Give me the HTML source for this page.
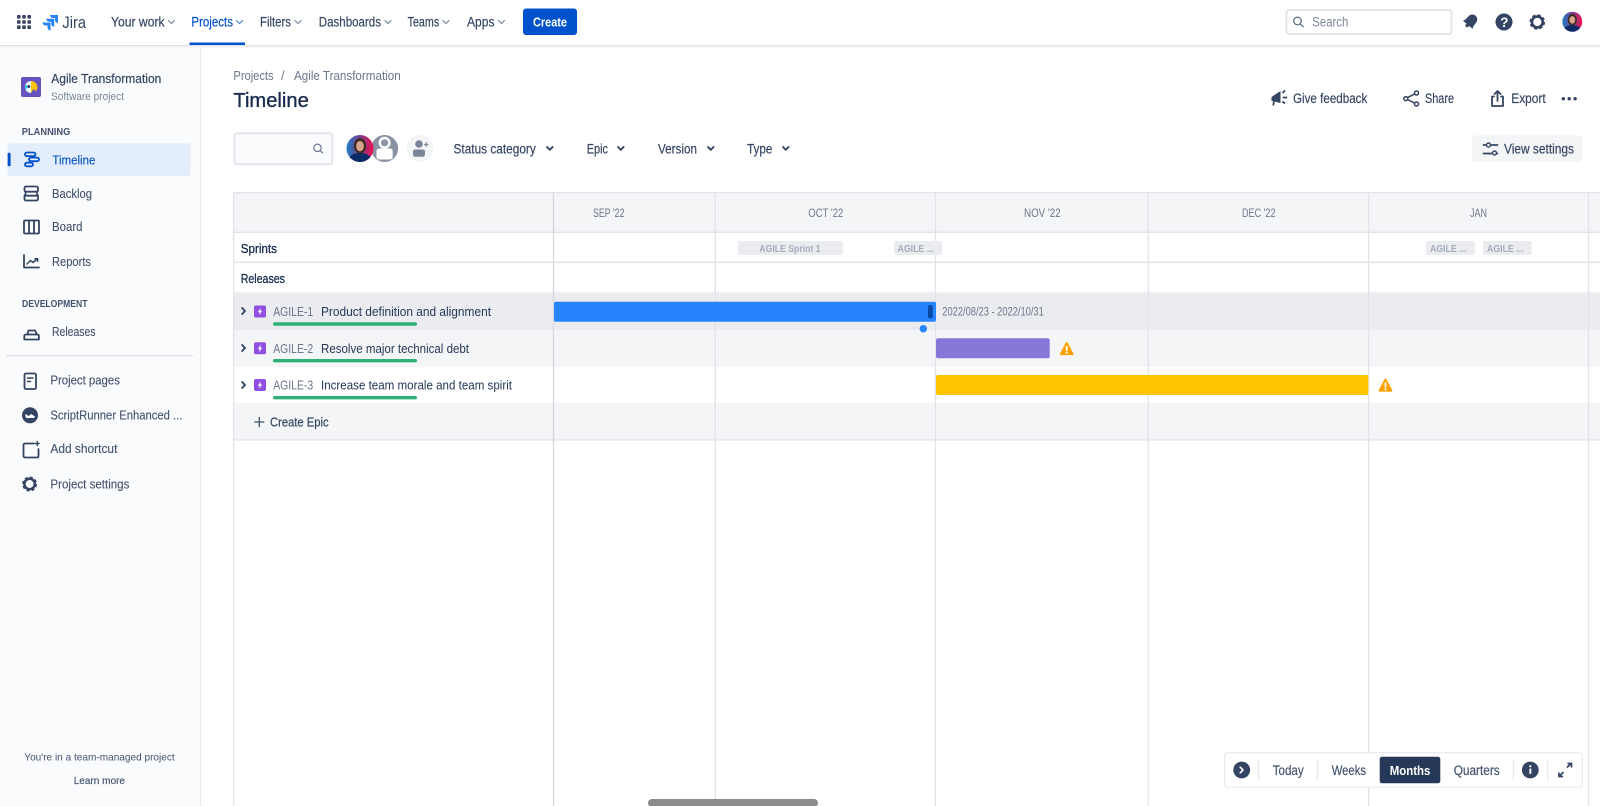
<!DOCTYPE html>
<html lang="en"><head><meta charset="utf-8"><title>Timeline - Jira</title>
<style>
html,body{margin:0;padding:0;background:#fff;width:1600px;height:806px;overflow:hidden}
svg{display:block}
text{font-family:"Liberation Sans",sans-serif;fill:#42526e;font-size:13px}
.n{fill:#344563;font-size:13.5px;stroke:#344563;stroke-width:.18}
.s{fill:#42526e;font-size:13px;stroke:#42526e;stroke-width:.12}
.d{fill:#172b4d;font-size:13px}
.m{fill:#6b778c;font-size:11.5px}
.st{fill:none;stroke:#344563;stroke-width:1.8;stroke-linecap:round;stroke-linejoin:round}
.ch{fill:none;stroke:#7a869a;stroke-width:1.2;stroke-linecap:round;stroke-linejoin:round}
.chd{fill:none;stroke:#344563;stroke-width:1.9;stroke-linecap:round;stroke-linejoin:round}
.l{stroke:#e1e3e8;stroke-width:1.3}
.chip{fill:#a5adba;font-size:10.5px;font-weight:bold}
</style></head><body>
<svg xmlns="http://www.w3.org/2000/svg" width="1600" height="806" viewBox="0 0 1600 806">
<defs>
<linearGradient id="ag" x1="0" y1="0" x2="1" y2="0"><stop offset="0" stop-color="#1d7fc4"/><stop offset=".5" stop-color="#7a3c8f"/><stop offset="1" stop-color="#f0134d"/></linearGradient>
<clipPath id="ac"><circle cx="0" cy="0" r="1"/></clipPath>
<g id="av"><g clip-path="url(#ac)"><rect x="-1" y="-1" width="2" height="2" fill="url(#ag)"/><ellipse cx="0" cy="-.2" rx=".46" ry=".56" fill="#3f2a22"/><ellipse cx="0" cy="-.18" rx=".29" ry=".38" fill="#d8a58c"/><ellipse cx="0" cy=".85" rx=".85" ry=".52" fill="#0b2a66"/></g></g>
<g id="warn"><path d="M7 .4 Q7.6 .4 8 1.2 L13.8 12.4 Q14.2 13.6 13 13.6 H1 Q-.2 13.6 .2 12.4 L6 1.2 Q6.4 .4 7 .4 Z" fill="#ffa000"/><rect x="6.1" y="4.3" width="1.8" height="5.3" rx=".7" fill="#fff"/><circle cx="7" cy="11.3" r="1.05" fill="#fff"/></g>
<g id="ep"><rect width="12" height="12" rx="2" fill="#904ee2"/><path d="M6.8 2.2 L3.8 6.6 H5.6 L5 9.8 L8.2 5.4 H6.3 Z" fill="#fff"/></g>
</defs>

<!-- sidebar -->
<rect x="0" y="45" width="200" height="761" fill="#fafbfc"/>
<rect x="200" y="45" width="1.2" height="761" fill="#ebecf0"/>

<!-- table backgrounds -->
<rect x="233.5" y="192.5" width="1366.5" height="40" fill="#f4f5f7"/>
<rect x="233.5" y="292.3" width="1366.5" height="37.7" fill="#ebecf0"/>
<rect x="233.5" y="330" width="1366.5" height="36.7" fill="#f4f5f7"/>
<rect x="233.5" y="403" width="1366.5" height="37" fill="#f4f5f7"/>
<path class="l" d="M233.5 192.6H1600M233.5 232.3H1600M233.5 262.3H1600M233.5 440H1600" fill="none"/>
<path class="l" d="M233.6 192.6V806M715.3 192.6V806M935.5 192.6V806M1148.3 192.6V806M1368.6 192.6V806M1588.5 192.6V806" fill="none"/>
<path d="M553.5 192.6V806" stroke="#d5d8de" stroke-width="1.3"/>

<!-- header -->
<rect x="0" y="0" width="1600" height="45" fill="#fff"/>
<rect x="0" y="45" width="1600" height="1" fill="#dfe1e6"/>
<rect x="0" y="46" width="1600" height="1.5" fill="#f1f2f4"/>
<g fill="#344563">
<rect x="17" y="15" width="3.6" height="3.6" rx=".8"/><rect x="22.2" y="15" width="3.6" height="3.6" rx=".8"/><rect x="27.4" y="15" width="3.6" height="3.6" rx=".8"/>
<rect x="17" y="20.2" width="3.6" height="3.6" rx=".8"/><rect x="22.2" y="20.2" width="3.6" height="3.6" rx=".8"/><rect x="27.4" y="20.2" width="3.6" height="3.6" rx=".8"/>
<rect x="17" y="25.4" width="3.6" height="3.6" rx=".8"/><rect x="22.2" y="25.4" width="3.6" height="3.6" rx=".8"/><rect x="27.4" y="25.4" width="3.6" height="3.6" rx=".8"/>
</g>
<g fill="#2684ff"><path d="M50 15h8v8a3 3 0 0 1-3-3v-2h-2a3 3 0 0 1-3-3z"/><path d="M46.2 18.8h8v8a3 3 0 0 1-3-3v-2h-2a3 3 0 0 1-3-3z"/><path d="M42.5 22.5h8v8a3 3 0 0 1-3-3v-2h-2a3 3 0 0 1-3-3z"/></g>
<text x="62.4" y="28" textLength="23.6" lengthAdjust="spacingAndGlyphs" style="font-size:17px;fill:#344563">Jira</text>
<text class="n" x="111" y="26.5" textLength="53.6" lengthAdjust="spacingAndGlyphs">Your work</text>
<path class="ch" d="M168.5 20.5l3 3 3-3"/>
<text class="n" x="191.4" y="26.5" textLength="41.6" lengthAdjust="spacingAndGlyphs" style="fill:#0052cc;stroke:#0052cc">Projects</text>
<path class="ch" d="M236.5 20.5l3 3 3-3" style="stroke:#4c7fd1"/>
<rect x="189.5" y="42.5" width="55.5" height="2.5" fill="#0052cc"/>
<text class="n" x="260" y="26.5" textLength="31" lengthAdjust="spacingAndGlyphs">Filters</text>
<path class="ch" d="M295 20.5l3 3 3-3"/>
<text class="n" x="318.8" y="26.5" textLength="62.2" lengthAdjust="spacingAndGlyphs">Dashboards</text>
<path class="ch" d="M385 20.5l3 3 3-3"/>
<text class="n" x="407.6" y="26.5" textLength="31.6" lengthAdjust="spacingAndGlyphs">Teams</text>
<path class="ch" d="M443 20.5l3 3 3-3"/>
<text class="n" x="467" y="26.5" textLength="27.5" lengthAdjust="spacingAndGlyphs">Apps</text>
<path class="ch" d="M498.5 20.5l3 3 3-3"/>
<rect x="523" y="8.5" width="54" height="26.5" rx="3" fill="#0052cc"/>
<text x="533" y="26.5" textLength="34" lengthAdjust="spacingAndGlyphs" style="fill:#fff;font-size:13px;font-weight:bold">Create</text>

<rect x="1286.5" y="10" width="165" height="24" rx="3" fill="#fff" stroke="#e1e4ea" stroke-width="2"/>
<circle cx="1297.5" cy="21" r="3.8" fill="none" stroke="#6b778c" stroke-width="1.4"/><path d="M1300.4 24l2.8 2.8" stroke="#6b778c" stroke-width="1.4" stroke-linecap="round"/>
<text x="1312.3" y="26.5" textLength="36" lengthAdjust="spacingAndGlyphs" style="fill:#7a869a;font-size:13.5px">Search</text>
<g transform="translate(1471 21) rotate(40)" fill="#344563"><path d="M-6.5 5 Q-5 3.5 -5 0 V-2 a5 5 0 0 1 10 0 V0 Q5 3.5 6.5 5 Z"/><circle cx="0" cy="6" r="1.7"/></g>
<circle cx="1504" cy="22" r="8.5" fill="#344563"/>
<text x="1500.3" y="27" style="fill:#fff;font-size:13.5px;font-weight:bold">?</text>
<circle cx="1537.3" cy="22" r="5.4" fill="none" stroke="#344563" stroke-width="2.6"/>
<circle cx="1537.3" cy="22" r="6.9" fill="none" stroke="#344563" stroke-width="1.8" stroke-dasharray="3.2 2.22"/>
<use href="#av" transform="translate(1572.3 21.7) scale(10)"/>

<!-- sidebar content -->
<rect x="21" y="77" width="20" height="20" rx="2" fill="#6554c0"/>
<path d="M31 81a6 6 0 0 0-6 6 6 6 0 0 0 6 6z" fill="#e6fcff"/>
<path d="M26 84.5a6 6 0 0 0 0 5l1.5-2.5z" fill="#00b8d9"/>
<path d="M31 81a6.5 6.5 0 0 1 6.5 6.5L36 91.5l-2.5-2.5-2.5 4z" fill="#ffc400"/>
<circle cx="28.8" cy="86.5" r="1.4" fill="#172b4d"/>
<text x="51.3" y="83" textLength="110" lengthAdjust="spacingAndGlyphs" style="fill:#344563;font-size:13px;stroke:#344563;stroke-width:.2">Agile Transformation</text>
<text x="51" y="100" textLength="73" lengthAdjust="spacingAndGlyphs" style="fill:#7a869a;font-size:11px">Software project</text>
<text x="21.8" y="135" textLength="48.5" lengthAdjust="spacingAndGlyphs" style="fill:#42526e;font-size:10px;font-weight:bold">PLANNING</text>
<rect x="7.6" y="143.3" width="183" height="32.7" rx="3" fill="#e4edfb"/>
<rect x="7.6" y="152.7" width="3" height="13.5" rx="1" fill="#0052cc"/>
<g fill="none" stroke="#0052cc" stroke-width="1.8">
<rect x="25" y="152.5" width="10.5" height="3.6" rx="1.8"/><rect x="29" y="157.6" width="10" height="3.6" rx="1.8"/><rect x="25" y="162.7" width="8" height="3.6" rx="1.8"/>
</g>
<text x="52.4" y="164.5" textLength="43" lengthAdjust="spacingAndGlyphs" style="fill:#0052cc;font-size:13px;stroke:#0052cc;stroke-width:.12">Timeline</text>

<g class="st" fill="none">
<path d="M26 186.5h10.5a1.5 1.5 0 0 1 1.5 1.5v2.5a1.5 1.5 0 0 1-1 1.2v3a1.5 1.5 0 0 1 1 1.3v3a1.5 1.5 0 0 1-1.5 1.5H26a1.5 1.5 0 0 1-1.5-1.5v-3a1.5 1.5 0 0 1 1-1.3v-3a1.5 1.5 0 0 1-1-1.2V188a1.5 1.5 0 0 1 1.5-1.5zM25.5 191.7h11.5M25.5 195.7h11.5" stroke-linecap="butt"/>
<rect x="24" y="220.5" width="15" height="13" rx="1"/><path d="M29 220.5v13M34 220.5v13" stroke-linecap="butt"/>
<path d="M24 255v12.5h15"/><path d="M27 264l3.5-3.5 2.5 2 4-3.5M35 258.8h2.6v2.4" stroke-width="1.5"/>
<path d="M24.3 339.5v-3.5a1.5 1.5 0 0 1 1.5-1.5h11.6a1.5 1.5 0 0 1 1.5 1.5v3.5z"/><path d="M27.5 334.5l1-4h6.5l2 4"/>
<rect x="24.5" y="373.5" width="11.5" height="15.5" rx="1.5"/><path d="M27.5 378h5.5M27.5 381.5h3" stroke-width="1.4"/>
<path d="M34 443.5h-9a1.5 1.5 0 0 0-1.5 1.5v11a1.5 1.5 0 0 0 1.5 1.5h12a1.5 1.5 0 0 0 1.5-1.5v-7"/><path d="M35.5 443.5h3.6M37.3 441.5v4" stroke-width="1.4"/>
</g>
<circle cx="30" cy="415.3" r="8" fill="#344563"/><path d="M25 414l4 2 2-2 4 2.5-1 1.5h-8z" fill="#fff"/>
<circle cx="29.6" cy="484" r="5.2" fill="none" stroke="#344563" stroke-width="2.5"/>
<circle cx="29.6" cy="484" r="6.6" fill="none" stroke="#344563" stroke-width="1.8" stroke-dasharray="3 2.18"/>
<text class="s" x="52" y="198" textLength="40" lengthAdjust="spacingAndGlyphs">Backlog</text>
<text class="s" x="52" y="231" textLength="30.5" lengthAdjust="spacingAndGlyphs">Board</text>
<text class="s" x="52" y="266" textLength="39" lengthAdjust="spacingAndGlyphs">Reports</text>
<text x="22" y="306.8" textLength="65.5" lengthAdjust="spacingAndGlyphs" style="fill:#42526e;font-size:10px;font-weight:bold">DEVELOPMENT</text>
<text class="s" x="52" y="336" textLength="43.5" lengthAdjust="spacingAndGlyphs">Releases</text>
<rect x="6" y="355" width="187" height="1.2" fill="#dfe1e6"/>
<text class="s" x="50.4" y="384.5" textLength="69.5" lengthAdjust="spacingAndGlyphs">Project pages</text>
<text class="s" x="50.4" y="419.5" textLength="132" lengthAdjust="spacingAndGlyphs">ScriptRunner Enhanced ...</text>
<text class="s" x="50.4" y="453" textLength="67" lengthAdjust="spacingAndGlyphs">Add shortcut</text>
<text class="s" x="50.4" y="488.5" textLength="79" lengthAdjust="spacingAndGlyphs">Project settings</text>
<text x="24.3" y="760.5" textLength="150.4" lengthAdjust="spacingAndGlyphs" style="fill:#42526e;font-size:10.5px">You're in a team-managed project</text>
<text x="73.7" y="784" textLength="51.3" lengthAdjust="spacingAndGlyphs" style="fill:#42526e;font-size:10.5px;stroke:#42526e;stroke-width:.15">Learn more</text>

<!-- page head -->
<text x="233.4" y="80" textLength="40.2" lengthAdjust="spacingAndGlyphs" style="fill:#6b778c;font-size:12.5px">Projects</text>
<text x="281" y="80" style="fill:#6b778c;font-size:12.5px">/</text>
<text x="294" y="80" textLength="106.7" lengthAdjust="spacingAndGlyphs" style="fill:#6b778c;font-size:12.5px">Agile Transformation</text>
<text x="233.4" y="107" textLength="75.4" lengthAdjust="spacingAndGlyphs" style="fill:#172b4d;font-size:20px;stroke:#172b4d;stroke-width:.35">Timeline</text>

<path d="M1271.5 97l9-6v12l-9-2.2z" fill="#344563"/><path d="M1274 101l-.8 4.5" stroke="#344563" stroke-width="1.8"/><path d="M1283 92.5l1.5-1.5M1283.5 97.5h3M1283 102l1.5 1" class="st" stroke-width="1.3"/>
<text class="n" x="1293" y="103" textLength="74.3" lengthAdjust="spacingAndGlyphs">Give feedback</text>
<g fill="none" stroke="#344563" stroke-width="1.5"><circle cx="1405.8" cy="98.6" r="2"/><circle cx="1416.5" cy="93" r="2"/><circle cx="1416.5" cy="104" r="2"/><path d="M1407.6 97.6l7-3.7M1407.6 99.6l7 3.5"/></g>
<text class="n" x="1425" y="103" textLength="29" lengthAdjust="spacingAndGlyphs">Share</text>
<path class="st" d="M1494 96.5h-2v9.5h11v-9.5h-2M1497.5 101V91.5M1494.5 94l3-3 3 3" stroke-width="1.5"/>
<text class="n" x="1511.3" y="103" textLength="34.4" lengthAdjust="spacingAndGlyphs">Export</text>
<g fill="#344563"><circle cx="1563.3" cy="98.7" r="1.7"/><circle cx="1569.2" cy="98.7" r="1.7"/><circle cx="1575.1" cy="98.7" r="1.7"/></g>

<rect x="234.4" y="133.3" width="98" height="31" rx="3" fill="#fafbfc" stroke="#e1e4ea" stroke-width="2"/>
<circle cx="317.5" cy="147.8" r="3.7" fill="none" stroke="#6b778c" stroke-width="1.2"/><path d="M320.2 150.6l2.5 2.6" stroke="#6b778c" stroke-width="1.2"/>

<circle cx="384.6" cy="148.5" r="13.5" fill="#8993a4"/>
<circle cx="384.6" cy="142.8" r="4.8" fill="#8993a4" stroke="#fff" stroke-width="2.4"/>
<path d="M376.5 151a2.5 2.5 0 0 1 2.5-2.5h11.2a2.5 2.5 0 0 1 2.5 2.5v6a3 3 0 0 1-3 2.5H379.5a3 3 0 0 1-3-2.5z" fill="#fff"/>
<use href="#av" transform="translate(360 148.5) scale(13.5)"/>
<circle cx="420" cy="148.5" r="13.5" fill="#f4f5f7"/>
<circle cx="419" cy="144" r="3.8" fill="#7a869a"/><path d="M413 151.5a2 2 0 0 1 2-2h8a2 2 0 0 1 2 2v3a2.5 2.5 0 0 1-2 2.2h-8a2.5 2.5 0 0 1-2-2.2z" fill="#7a869a"/>
<path d="M424 144.5h4.5M426.2 142.2v4.6" stroke="#7a869a" stroke-width="1.3"/>

<text class="n" x="453.5" y="153.5" textLength="82.3" lengthAdjust="spacingAndGlyphs">Status category</text>
<path class="chd" d="M547 147l2.8 2.8 2.8-2.8"/>
<text class="n" x="586.7" y="153.5" textLength="21.3" lengthAdjust="spacingAndGlyphs">Epic</text>
<path class="chd" d="M618 147l2.8 2.8 2.8-2.8"/>
<text class="n" x="658" y="153.5" textLength="39" lengthAdjust="spacingAndGlyphs">Version</text>
<path class="chd" d="M708 147l2.8 2.8 2.8-2.8"/>
<text class="n" x="747" y="153.5" textLength="25.4" lengthAdjust="spacingAndGlyphs">Type</text>
<path class="chd" d="M783 147l2.8 2.8 2.8-2.8"/>

<rect x="1472.3" y="135.3" width="110" height="26.7" rx="3" fill="#f4f5f7"/>
<path class="st" d="M1483.5 145h2.5M1491.5 145h6M1483.5 153.5h8.5M1496.5 153.5h1" stroke-width="1.4"/>
<circle cx="1488.5" cy="145" r="2" fill="none" stroke="#344563" stroke-width="1.4"/><circle cx="1494.5" cy="153" r="2" fill="none" stroke="#344563" stroke-width="1.4"/>
<text class="n" x="1504" y="153.5" textLength="70" lengthAdjust="spacingAndGlyphs">View settings</text>

<!-- month labels -->
<g>
<text class="m" x="593" y="217" textLength="31.5" lengthAdjust="spacingAndGlyphs">SEP '22</text>
<text class="m" x="808.3" y="217" textLength="35" lengthAdjust="spacingAndGlyphs">OCT '22</text>
<text class="m" x="1024" y="217" textLength="36.7" lengthAdjust="spacingAndGlyphs">NOV '22</text>
<text class="m" x="1242" y="217" textLength="33.5" lengthAdjust="spacingAndGlyphs">DEC '22</text>
<text class="m" x="1470" y="217" textLength="17" lengthAdjust="spacingAndGlyphs">JAN</text>
</g>

<!-- left labels -->
<text x="240.7" y="252.8" textLength="36.3" lengthAdjust="spacingAndGlyphs" class="d" style="stroke:#172b4d;stroke-width:.3">Sprints</text>
<text x="240.7" y="282.8" textLength="44.3" lengthAdjust="spacingAndGlyphs" class="d" style="stroke:#172b4d;stroke-width:.3">Releases</text>

<path class="chd" d="M242.2 308l2.8 3-2.8 3"/>
<use href="#ep" x="254" y="305.5"/>
<text x="273.2" y="316" textLength="40" lengthAdjust="spacingAndGlyphs" style="fill:#6b778c;font-size:13px">AGILE-1</text>
<text class="d" x="321" y="316" textLength="170" lengthAdjust="spacingAndGlyphs" style="fill:#253858">Product definition and alignment</text>
<rect x="273" y="322.3" width="144" height="3.4" rx="1.7" fill="#2fb077"/>

<path class="chd" d="M242.2 345l2.8 3-2.8 3"/>
<use href="#ep" x="254" y="342.3"/>
<text x="273.2" y="353" textLength="40" lengthAdjust="spacingAndGlyphs" style="fill:#6b778c;font-size:13px">AGILE-2</text>
<text class="d" x="321" y="353" textLength="148" lengthAdjust="spacingAndGlyphs" style="fill:#253858">Resolve major technical debt</text>
<rect x="273" y="359" width="144" height="3.4" rx="1.7" fill="#2fb077"/>

<path class="chd" d="M242.2 382l2.8 3-2.8 3"/>
<use href="#ep" x="254" y="379"/>
<text x="273.2" y="389.5" textLength="40" lengthAdjust="spacingAndGlyphs" style="fill:#6b778c;font-size:13px">AGILE-3</text>
<text class="d" x="321" y="389.5" textLength="191" lengthAdjust="spacingAndGlyphs" style="fill:#253858">Increase team morale and team spirit</text>
<rect x="273" y="396" width="144" height="3.4" rx="1.7" fill="#2fb077"/>

<path d="M259.3 417v10M254.3 422h10" stroke="#42526e" stroke-width="1.3"/>
<text x="270" y="426.5" textLength="58.6" lengthAdjust="spacingAndGlyphs" style="fill:#344563;font-size:13px;stroke:#344563;stroke-width:.2">Create Epic</text>

<!-- sprint chips -->
<rect x="738" y="241" width="104.7" height="14" rx="2" fill="#ebecf0"/>
<text class="chip" x="759.3" y="251.8" textLength="61.3" lengthAdjust="spacingAndGlyphs">AGILE Sprint 1</text>
<rect x="894" y="241" width="48" height="14" rx="2" fill="#ebecf0"/>
<text class="chip" x="897.5" y="251.8" textLength="36.5" lengthAdjust="spacingAndGlyphs">AGILE ...</text>
<rect x="1426" y="241" width="48.7" height="14" rx="2" fill="#ebecf0"/>
<text class="chip" x="1430" y="251.8" textLength="36.5" lengthAdjust="spacingAndGlyphs">AGILE ...</text>
<rect x="1483" y="241" width="48.7" height="14" rx="2" fill="#ebecf0"/>
<text class="chip" x="1487" y="251.8" textLength="36.5" lengthAdjust="spacingAndGlyphs">AGILE ...</text>

<!-- bars -->
<rect x="554" y="301.7" width="382" height="20" rx="2" fill="#2684ff"/>
<rect x="928" y="305" width="4.7" height="13.3" rx="2" fill="#0747a6"/>
<circle cx="923.3" cy="328.7" r="3.7" fill="#2684ff"/>
<text x="942.3" y="315.7" textLength="101.5" lengthAdjust="spacingAndGlyphs" style="fill:#6b778c;font-size:11.5px">2022/08/23 - 2022/10/31</text>
<rect x="936" y="338.3" width="113.7" height="20" rx="2" fill="#8777d9"/>
<use href="#warn" x="1059.7" y="341.5"/>
<rect x="936" y="375" width="432.3" height="20" rx="2" fill="#ffc400"/>
<use href="#warn" x="1378.5" y="378"/>

<!-- scrollbar -->
<rect x="648" y="799" width="170" height="8" rx="4" fill="#8c8c8c"/>

<!-- bottom control -->
<rect x="1224.7" y="752.7" width="357.6" height="34.6" rx="3" fill="#fff" stroke="#e4e6ea" stroke-width="1"/>
<rect x="1224.7" y="787" width="357.6" height="1.2" fill="#f1f2f4"/>
<circle cx="1241.7" cy="770" r="8.4" fill="#344563"/><path d="M1240.2 767.2l2.8 2.8-2.8 2.8" fill="none" stroke="#fff" stroke-width="1.6" stroke-linecap="round" stroke-linejoin="round"/>
<path d="M1258.7 760v20M1317.3 760v20M1513.3 760v20M1547.7 760v20" stroke="#e1e3e8" stroke-width="1"/>
<text class="n" x="1272.7" y="775" textLength="31" lengthAdjust="spacingAndGlyphs" style="fill:#42526e;stroke:#42526e">Today</text>
<text class="n" x="1331.7" y="775" textLength="34.3" lengthAdjust="spacingAndGlyphs" style="fill:#42526e;stroke:#42526e">Weeks</text>
<rect x="1379.7" y="756.7" width="60.6" height="26.6" rx="2.5" fill="#253858"/>
<text x="1389.7" y="775" textLength="40.7" lengthAdjust="spacingAndGlyphs" style="fill:#fff;font-size:13px;font-weight:bold">Months</text>
<text class="n" x="1453.7" y="775" textLength="46" lengthAdjust="spacingAndGlyphs" style="fill:#42526e;stroke:#42526e">Quarters</text>
<circle cx="1530.3" cy="770" r="8.4" fill="#344563"/><rect x="1529.4" y="768.5" width="1.9" height="5.5" rx=".5" fill="#fff"/><circle cx="1530.3" cy="766.2" r="1.1" fill="#fff"/>
<path d="M1559.5 776l4-4M1559 772.5v4h4M1567 767.5l4-4M1567.5 763.5h4v4" fill="none" stroke="#344563" stroke-width="1.7"/>
</svg>
</body></html>
